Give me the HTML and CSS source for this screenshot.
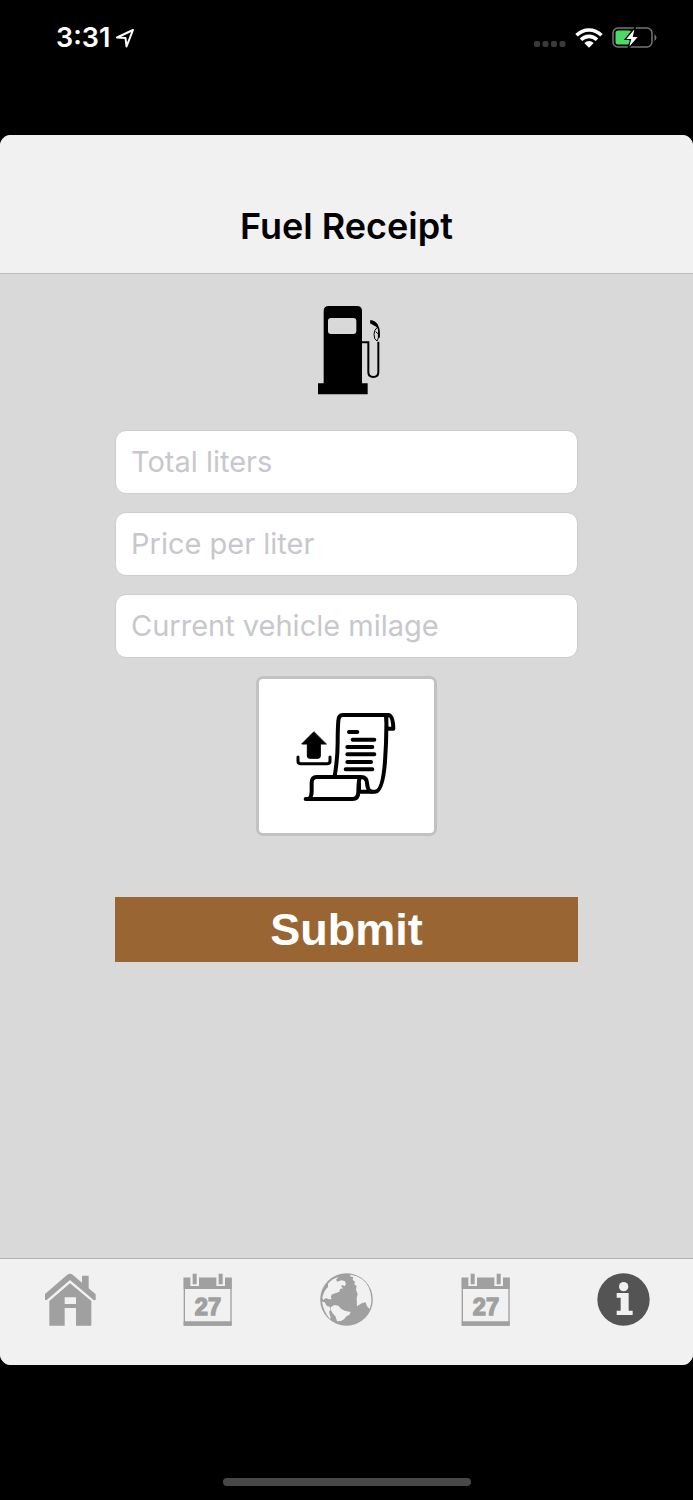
FILE: index.html
```html
<!DOCTYPE html>
<html lang="en">
<head>
<meta charset="utf-8">
<meta name="viewport" content="width=device-width, initial-scale=1">
<title>Fuel Receipt</title>
<link rel="stylesheet" href="styles.css">
</head>
<body>
<div class="status">
  <div class="status-group status-left">
    <span class="time">3:31</span>
    <svg width="20" height="20" viewBox="0 0 20 20" fill="none" stroke="#fff" stroke-width="2" stroke-linejoin="round"><path d="M2 9.500 18 2 11.500 18.500 10.500 10z"/></svg>
  </div>
  <div class="status-group">
    <svg width="32" height="18" viewBox="0 0 32 18" fill="#3a3a3c"><rect y="12" width="6" height="6" rx="2"/><rect x="8.500" y="12" width="6" height="6" rx="2"/><rect x="17" y="12" width="6" height="6" rx="2"/><rect x="25.500" y="12" width="6" height="6" rx="2"/></svg>
    <svg width="28" height="20" viewBox="0 0 28 20" fill="none" stroke="#fff" stroke-width="3.600"><path d="M1.500 7.300Q7 2 14 2t12.500 5.300M6 11.800q3.500-3.400 8-3.400t8 3.400"/><path d="M9.300 15q4.700-3.800 9.400 0L14 19.700z" fill="#fff" stroke="none"/></svg>
    <svg width="46" height="22" viewBox="0 0 46 22"><rect x="1" y="1" width="39" height="19" rx="5" fill="none" stroke="#767676" stroke-width="1.500"/><path d="M42.500 7q4 4 0 7z" fill="#767676"/><rect x="3.500" y="3.500" width="16" height="14" rx="2.500" fill="#4cd964"/><path d="M23.500 0 13 12.500h5.500L16 22 27 9.500h-5.500z" fill="#fff" stroke="#000" stroke-width="1.200"/></svg>
  </div>
</div>
<div class="app">
  <header class="navbar"><h1 class="title">Fuel Receipt</h1></header>
  <main class="content">
    <svg class="pump" width="69" height="90" viewBox="36 30 207 270">
      <path d="M54 298v-33h17V48q0-15 15-15h85q15 0 15 15v217h17v33zM93 69q-9 0-9 9v30q0 9 9 9h67q9 0 9-9V78q0-9-9-9z" fill-rule="evenodd"/>
      <path d="M186 142h19v90q0 14 15 14 15 0 15-14v-92" fill="none" stroke="#000" stroke-width="6"/>
      <path d="M213 80q17 3 22 19 3 9 2 29" fill="none" stroke="#000" stroke-width="5"/>
      <path d="M211 75q15 2 22 14l-2 8-21-12z"/>
      <path d="M233 96q-11 8-11 22 0 16 9 20 6-8 4-18l2-11M227 110l7 6" fill="none" stroke="#000" stroke-width="3"/>
    </svg>
    <form class="form">
      <input class="field" type="text" aria-label="Total liters" placeholder="Total liters">
      <input class="field" type="text" aria-label="Price per liter" placeholder="Price per liter">
      <input class="field" type="text" aria-label="Current vehicle milage" placeholder="Current vehicle milage">
      <button class="upload" type="button" aria-label="Upload receipt">
        <svg width="105" height="93" viewBox="132 120 315 279" fill="none" stroke="#000" stroke-width="12" stroke-linejoin="round" stroke-linecap="round">
          <path d="M254 319q9-55 9-103 0-38 2-64 1-17 13-17h137q14 1 15 41h-20l-2-39M409 140q1 68-4 135-7 90-30 90h-45"/>
          <path d="M167 387h140q18 0 18-21 1-45 6-45H200q-15 0-15 17v25q0 16-7 24M331 321q19-1 20 17 1 25 14 27M327 339v26"/>
          <path d="M297 186h25M308 209h65M292 231h75M292 253h81M292 276h71M287 298h80"/>
          <path d="M144 261v13q0 7 8 7h80q8 0 8-7v-13" stroke-width="9"/>
          <path d="M191 186l-36 36h17v36q0 7 7 7h25q7 0 7-7v-36h17z" fill="#000" stroke-width="3"/>
        </svg>
      </button>
      <button class="submit" type="submit">Submit</button>
    </form>
  </main>
  <nav class="tabbar">
    <button class="tab" aria-label="Home">
      <svg class="tab-icon" viewBox="40 70 159 159" fill="#a0a0a0"><path d="M46 133l67-58q8-6 16 0l28 24V78h20v38l21 18v17h-6l-71-60-70 60h-5z"/><path d="M59 154l62-53 64 53v74h-46v-53h-34v53H59zM105 143v20h34v-20z" fill-rule="evenodd"/></svg>
    </button>
    <button class="tab" aria-label="Calendar">
      <svg class="tab-icon" viewBox="454 70 159 159"><rect x="464" y="86" width="140" height="140" fill="none" stroke="#a0a0a0" stroke-width="4"/><path d="M462 84h144v34H462zM462 215h144v13H462z" fill="#a0a0a0"/><path d="M482 72h26v37h-26zM560 72h26v37h-26z" fill="#f1f1f1"/><path d="M489 72h12v32h-12zM567 72h12v32h-12z" fill="#a0a0a0"/><text class="date" x="535" y="195" text-anchor="middle">27</text></svg>
    </button>
    <button class="tab" aria-label="World">
      <svg class="tab-icon" viewBox="12 10 159 159"><circle cx="91.500" cy="89.500" r="79" fill="#a0a0a0"/><path d="M104 15q38 5 54 38 15 34 3 65l-8-8-4-12-12 3-14 9-1-24 3-12-5-14 2-10-7-6 2-8-7-6 2-7-10-3z" fill="#f1f1f1"/><path d="M36 42q14-16 32-20l-8 8 4 6 12-4 10 2 4 8-4 8-6-4-5 4 6 6-9 2-2 8-10 4-12 4-4 8 3 6-9 1-8-4-8 6-3-6q4-22 17-33zM18 96l8 2 6 10 10 4 2 8-5 6 5 18-2 4Q22 124 18 96zM45 112l10-6 12 2 8 9 11 6 18 4-4 9-8 3-8 10-9 5-12 1-4-14-9-10-5-9z" fill="#f1f1f1"/></svg>
    </button>
    <button class="tab" aria-label="Events">
      <svg class="tab-icon" viewBox="454 70 159 159"><rect x="464" y="86" width="140" height="140" fill="none" stroke="#a0a0a0" stroke-width="4"/><path d="M462 84h144v34H462zM462 215h144v13H462z" fill="#a0a0a0"/><path d="M482 72h26v37h-26zM560 72h26v37h-26z" fill="#f1f1f1"/><path d="M489 72h12v32h-12zM567 72h12v32h-12z" fill="#a0a0a0"/><text class="date" x="535" y="195" text-anchor="middle">27</text></svg>
    </button>
    <button class="tab" aria-label="Info" aria-current="page">
      <svg class="tab-icon" viewBox="51 70 159 159"><circle cx="130.500" cy="149.500" r="78.500" fill="#545454"/><circle cx="131" cy="111" r="14" fill="#f1f1f1"/><path d="M110 130h36v53h12v13h-48v-13h12v-39h-12z" fill="#f1f1f1"/></svg>
    </button>
  </nav>
</div>
<div class="bottom"><div class="indicator"></div></div>
</body>
</html>
```
FILE: styles.css
```css
* { box-sizing: border-box; }

body {
  margin: 0;
  min-height: 100vh;
  display: flex;
  flex-direction: column;
  background: #000;
  font-family: Inter, "Liberation Sans", sans-serif;
}

button { font: inherit; margin: 0; cursor: pointer; }
svg { display: block; }

.status {
  height: 135px;
  padding: 22px 35px 0 56px;
  display: flex;
  justify-content: space-between;
  align-items: flex-start;
  color: #fff;
}

.status-group {
  display: flex;
  align-items: center;
  gap: 9px;
  height: 32px;
}

.status-left { gap: 5px; }

.time { font-size: 27px; font-weight: 600; line-height: 32px; }

.app {
  flex: 1;
  display: flex;
  flex-direction: column;
  background: #d9d9d9;
  border-radius: 11px;
  overflow: hidden;
}

.navbar {
  padding: 68px 20px 24px;
  background: #f1f1f1;
  border-bottom: 1px solid #bdbdbd;
  text-align: center;
}

.title {
  margin: 0;
  font-size: 36px;
  line-height: 46px;
  font-weight: 600;
}

.content {
  flex: 1;
  padding: 31px 115px;
  display: flex;
  flex-direction: column;
  align-items: center;
}

.form {
  width: 100%;
  margin-top: 35px;
  display: flex;
  flex-direction: column;
  align-items: center;
  gap: 18px;
}

.field {
  width: 100%;
  height: 64px;
  padding: 0 15px 2px;
  border: 1px solid #cdcdcd;
  border-radius: 11px;
  background: #fff;
  font-family: inherit;
  font-size: 29px;
  color: #000;
}

.field::placeholder { color: #c7c7cc; opacity: 1; }

.upload {
  width: 181px;
  height: 160px;
  padding: 0;
  display: flex;
  align-items: center;
  justify-content: center;
  background: #fff;
  border: 3px solid #c2c2c2;
  border-radius: 7px;
}

.submit {
  width: 100%;
  margin-top: 43px;
  padding: 0;
  border: 0;
  background: #996633;
  color: #fff;
  font-family: "Liberation Sans", sans-serif;
  font-size: 45px;
  font-weight: 700;
  line-height: 65px;
}

.tabbar {
  display: flex;
  height: 107px;
  padding-top: 14px;
  background: #f1f1f1;
  border-top: 1px solid #b4b4b4;
}

.tab {
  flex: 1;
  padding: 0;
  border: 0;
  background: none;
  display: flex;
  justify-content: center;
  align-items: flex-start;
}

.tab-icon { width: 53px; height: 53px; }

.date {
  font: 700 71px "Liberation Sans", sans-serif;
  fill: #a0a0a0;
  stroke: #a0a0a0;
  stroke-width: 4px;
}

.bottom {
  height: 135px;
  padding-bottom: 14px;
  display: flex;
  justify-content: center;
  align-items: flex-end;
}

.indicator {
  width: 248px;
  height: 8px;
  border-radius: 4px;
  background: #484848;
}
```
